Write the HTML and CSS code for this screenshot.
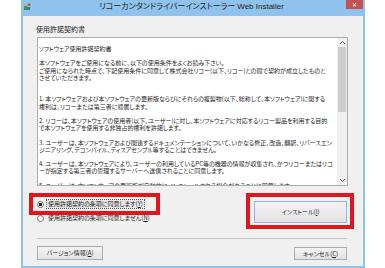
FILE: index.html
```html
<html lang="ja">
<head>
    <meta charset="UTF-8">
    <title>リコーカンタンドライバーインストーラー Web Installer</title>
    <link rel="stylesheet" href="styles.css">
</head>
<body>
    <div class="window">
        <div class="titlebar">
            <svg class="app-icon" viewBox="0 0 7 7">
                <rect x="0" y="3" width="3" height="4" fill="#3c9a3c"/>
                <rect x="3" y="4" width="3" height="3" fill="#2f6fc4"/>
                <polygon points="1,0 2,2 0,2" fill="#e0a020"/>
                <polygon points="5,0 7,2 5,3 3,2" fill="#d83a2e"/>
            </svg>
            <div class="title"><span class="jp">リコーカンタンドライバーインストーラー</span> <span class="en">Web Installer</span></div>
            <div class="close">&#x2715;</div>
        </div>

        <div class="client">
            <div class="group-label">使用許諾契約書</div>

            <div class="license">
                <div class="license-text">
                    <p>ソフトウェア使用許諾契約書</p>
                    <p class="lead">本ソフトウェアをご使用になる前に、以下の使用条件をよくお読み下さい。<br>ご使用になられた時点で、下記使用条件に同意して株式会社リコー(以下、リコー)との間で契約が成立したものと<br>させていただきます。</p>
                    <p>1. 本ソフトウェアおよび本ソフトウェアの更新版ならびにそれらの複製物(以下、総称して、本ソフトウェア)に関する<br>権利は、リコーまたは第三者に帰属します。</p>
                    <p>2. リコーは、本ソフトウェアの使用者(以下、ユーザー)に対し、本ソフトウェアに対応するリコー製品を利用する目的<br>で本ソフトウェアを使用する非独占的権利を許諾します。</p>
                    <p>3. ユーザーは、本ソフトウェアおよび関連するドキュメンテーションについて、いかなる修正、改造、翻訳、リバースエン<br>ジニアリング、デコンパイル、ディスアセンブル等することはできません。</p>
                    <p>4. ユーザーは、本ソフトウェアにより、ユーザーの利用しているPC等の機器の情報が収集され、かつリコーまたはリコ<br>ーが指定する第三者の管理するサーバーへ送信されることに同意します。</p>
                    <p>5. ユーザーは、本ソフトウェアの更新版が自動的にインストールされる場合があることに同意します。</p>
                </div>
                <div class="scrollbar">
                    <svg class="arrow" viewBox="0 0 7 5"><polyline points="1,4 3.5,1.5 6,4" fill="none" stroke="#606060" stroke-width="1"/></svg>
                    <div class="thumb"></div>
                    <div class="track"></div>
                    <svg class="arrow" viewBox="0 0 7 5"><polyline points="1,1 3.5,3.5 6,1" fill="none" stroke="#606060" stroke-width="1"/></svg>
                </div>
            </div>

            <div class="choice-row">
                <div class="radios">
                    <div class="radio-row marked"><span class="radio checked"></span><span class="radio-text focus">使用許諾契約の条項に同意します(<u>Y</u>)</span></div>
                    <div class="radio-row"><span class="radio"></span><span class="radio-text">使用許諾契約の条項に同意しません(<u>N</u>)</span></div>
                </div>
                <div class="install-mark">
                    <button class="btn install">インストール(<u>I</u>)</button>
                </div>
            </div>

            <div class="separator"></div>

            <div class="button-row">
                <button class="btn version">バージョン情報(<u>A</u>)</button>
                <button class="btn cancel">キャンセル(<u>C</u>)</button>
            </div>
        </div>
    </div>
</body>
</html>
```

FILE: styles.css
```css
*{box-sizing:border-box;}
body{margin:0;background:#fff;font-family:"Noto Sans CJK JP",sans-serif;color:#1e1e1e;}

.window{margin-left:21px;width:344px;height:268px;border:2px solid #8fc2ec;border-top:0;background:#f0f0f0;display:flex;flex-direction:column;}

.titlebar{height:16px;background:#8fc2ec;display:flex;align-items:flex-start;}
.app-icon{width:7px;height:7px;margin:3px 0 0 1px;flex:none;}
.title{flex:1;text-align:center;font-size:8px;line-height:8px;padding:2px 0 0 6px;white-space:nowrap;color:#222;}
.title .jp{font-feature-settings:"palt";}
.title .en{font-family:"Liberation Sans",sans-serif;}
.close{width:17px;height:9px;background:#c75050;color:#fff;font:bold 6px/9px "DejaVu Sans",sans-serif;text-align:center;flex:none;}

.client{flex:1;padding:9px 15px 0 14px;display:flex;flex-direction:column;}
.group-label{font-size:7px;line-height:9px;height:12px;margin-left:-1px;font-feature-settings:"palt";}

.license{height:149px;border:1px solid #abadb3;background:#fff;display:flex;flex:none;}
.license-text{flex:1;overflow:hidden;padding:7px 0 0 1px;font-size:6px;line-height:7.2px;white-space:nowrap;font-feature-settings:"palt";}
.license-text p{margin:0 0 7.2px;}
.license-text p.lead{margin-bottom:14.4px;}

.scrollbar{width:10px;background:#f0f0f0;display:flex;flex-direction:column;align-items:center;}
.scrollbar .arrow{width:7px;height:5px;margin:2px 0;}
.scrollbar .thumb{width:8px;height:65px;background:#cdcdcd;}
.scrollbar .track{flex:1;}

.choice-row{display:flex;justify-content:space-between;margin-top:11px;}
.radios{margin-left:-4px;}
.radio-row{display:flex;align-items:center;height:14px;padding-left:4px;font-size:6px;font-feature-settings:"palt";}
.radio-row.marked{width:123px;outline:4px solid #e0161c;}
.radio{width:7px;height:7px;border:1px solid #707070;border-radius:50%;background:#fff;margin-right:3px;flex:none;}
.radio.checked{background:radial-gradient(circle,#2b2b2b 0 1.5px,#fff 2px);}
.radio-text{line-height:8px;padding:0 1px;}
.radio-text.focus{outline:1px dotted #555;background:#e6e6e6;}

.install-mark{width:100px;height:28px;padding:4px 3px 2px 4px;margin-right:-2px;outline:4px solid #e0161c;}

.btn{font-family:"Noto Sans CJK JP",sans-serif;font-size:6px;line-height:1;font-feature-settings:"palt";color:#1e1e1e;border:1px solid #acacac;background:linear-gradient(#f3f3f3,#e3e3e3);padding:0;}
.btn.install{width:93px;height:22px;border-color:#8eb8e2;}

.separator{margin:13px 1px 0 0;border-top:1px solid #c9c9c9;}

.button-row{display:flex;justify-content:space-between;align-items:flex-start;margin-top:7px;}
.btn.version{width:66px;height:14px;}
.btn.cancel{width:53px;height:13px;margin:1px 1px 0 0;}
```
